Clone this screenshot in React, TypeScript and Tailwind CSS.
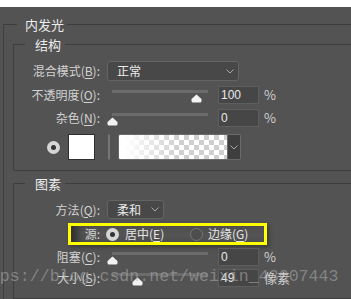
const font = "font-['Noto_Sans_CJK_SC',sans-serif]";

function Chevron() {
  return (
    <svg width="8" height="5" viewBox="0 0 8 5" className="shrink-0">
      <polyline points="0.5,0.5 4,4 7.5,0.5" fill="none" stroke="#a8a8a8" strokeWidth="1" />
    </svg>
  );
}

function Thumb({ left }: { left: number }) {
  return (
    <svg
      width="11"
      height="9"
      viewBox="0 0 11 9"
      className="absolute top-[8px]"
      style={{ left: left - 5.5 }}
    >
      <path d="M5.5 0.5 L10.5 5 L10.5 7 Q10.5 8.5 9 8.5 L2 8.5 Q0.5 8.5 0.5 7 L0.5 5 Z" fill="#f2f2f2" />
    </svg>
  );
}

function Radio({ checked }: { checked?: boolean }) {
  return checked ? (
    <span className="w-[13px] h-[13px] rounded-full bg-[#d6d6d6] flex items-center justify-center shrink-0">
      <span className="w-[5px] h-[5px] rounded-full bg-[#333]" />
    </span>
  ) : (
    <span className="w-[13px] h-[13px] rounded-full border border-[#767676] bg-[#4e4e4e] shrink-0" />
  );
}

function Label({ text, k }: { text: string; k: string }) {
  return (
    <span className="w-[86px] text-right text-[12px] text-[#d2d2d2] whitespace-nowrap shrink-0">
      {text}(<span className="underline underline-offset-2">{k}</span>):
    </span>
  );
}

function Title({ text }: { text: string }) {
  return (
    <div className="-mt-[9px] ml-[11px] w-fit pl-[10px] pr-[4px] bg-[#535353] text-[13px] leading-[18px] text-[#ececec]">
      {text}
    </div>
  );
}

function SliderRow({
  text,
  k,
  value,
  pos,
  unit,
  mt,
}: {
  text: string;
  k: string;
  value: string;
  pos: number;
  unit: string;
  mt: string;
}) {
  return (
    <div className={`flex items-center h-[18px] ${mt}`}>
      <Label text={text} k={k} />
      <div className="relative w-[118px] h-[18px] shrink-0">
        <div className="mt-[4px] ml-[12px] w-[96px] h-[3px] bg-[#6b6b6b]" />
        <Thumb left={pos} />
      </div>
      <div className="w-[41px] h-[18px] bg-[#464646] border border-[#5e5e5e] text-[12px] leading-[16px] pl-[2px] text-[#e8e8e8] font-['Liberation_Sans',sans-serif] shrink-0">
        {value}
      </div>
      <span className="ml-[5px] text-[13px] text-[#d2d2d2]">{unit}</span>
    </div>
  );
}

export default function App() {
  return (
    <div className={`relative w-[351px] h-[299px] overflow-hidden bg-[#535353] ${font}`}>
      <div className="h-[7px] bg-white" />
      <div className="ml-[3px] mt-[17px] border-l border-t border-[#3e3e3e] h-[300px]">
        <div className="-mt-[9px] ml-[13px] w-fit pl-[8px] pr-[3px] bg-[#535353] text-[13px] leading-[18px] text-[#ececec]">
          内发光
        </div>

        <div className="ml-[9px] mt-[10px] border-l border-t border-b border-[#3e3e3e] pb-[10px]">
          <Title text="结构" />
          <div className="flex items-center h-[20px] mt-[7px]">
            <Label text="混合模式" k="B" />
            <div className="ml-[7px] w-[132px] h-[20px] rounded-[3px] border border-[#646464] bg-[#484848] flex items-center justify-between pl-[9px] pr-[4px] text-[12px] text-[#ececec]">
              正常
              <Chevron />
            </div>
          </div>
          <SliderRow text="不透明度" k="O" value="100" pos={96} unit="%" mt="mt-[5px]" />
          <SliderRow text="杂色" k="N" value="0" pos={12} unit="%" mt="mt-[5px]" />
          <div className="flex items-center h-[26px] mt-[7px]">
            <span className="ml-[33px]">
              <Radio checked />
            </span>
            <span className="ml-[8px] w-[27px] h-[26px] bg-white border border-[#2e2e2e]" />
            <span className="ml-[13px]">
              <Radio />
            </span>
            <span className="ml-[8px] w-[110px] h-[26px] rounded-l-[2px] border border-[#6a6a6a] bg-[image:linear-gradient(to_right,#ffffff_5%,rgba(255,255,255,0)_55%),repeating-conic-gradient(#cfcfcf_0_25%,#ffffff_0_50%)] bg-[length:100%_100%,10px_10px]" />
            <span className="w-[13px] h-[26px] bg-[#3e3e3e] border border-l-0 border-[#6a6a6a] rounded-r-[2px] flex items-center justify-center">
              <Chevron />
            </span>
          </div>
        </div>

        <div className="ml-[9px] mt-[12px] border-l border-t border-b border-[#3e3e3e] pb-[11px]">
          <Title text="图素" />
          <div className="flex items-center h-[19px] mt-[7px]">
            <Label text="方法" k="Q" />
            <div className="ml-[7px] w-[57px] h-[19px] rounded-[3px] border border-[#646464] bg-[#484848] flex items-center justify-between pl-[9px] pr-[4px] text-[12px] text-[#ececec]">
              柔和
              <Chevron />
            </div>
          </div>
          <div className="mt-[4px] ml-[54px] w-[199px] h-[22px] border-[3px] border-[#ffff00] flex items-center shadow-[inset_10px_0_8px_-4px_rgba(0,0,0,0.45),2px_2px_4px_rgba(0,0,0,0.35)] text-[12px] text-[#d2d2d2]">
            <span className="w-[29px] text-right">源:</span>
            <span className="ml-[6px]">
              <Radio checked />
            </span>
            <span className="ml-[6px] w-[65px] whitespace-nowrap text-[#e6e6e6]">
              居中(<span className="underline underline-offset-2">E</span>)
            </span>
            <Radio />
            <span className="ml-[5px] whitespace-nowrap text-[#e6e6e6]">
              边缘(<span className="underline underline-offset-2">G</span>)
            </span>
          </div>
          <SliderRow text="阻塞" k="C" value="0" pos={12} unit="%" mt="mt-[3px]" />
          <SliderRow text="大小" k="S" value="49" pos={37} unit="像素" mt="mt-[3px]" />
        </div>
      </div>

      <div className="absolute left-[-30px] top-[266px] font-['Liberation_Mono',monospace] text-[16.6px] leading-[22px] text-[rgba(176,176,176,0.55)] whitespace-nowrap pointer-events-none">
        https://blog.csdn.net/weixin_43007443
      </div>
    </div>
  );
}
